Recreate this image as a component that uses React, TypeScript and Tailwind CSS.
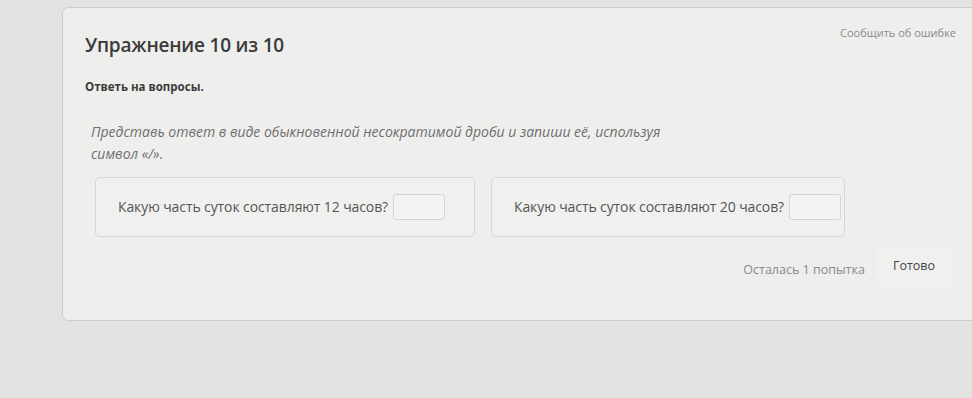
import React from "react";

const questions = [
  { id: 1, text: "Какую часть суток составляют 12 часов?", width: "w-[380px]" },
  { id: 2, text: "Какую часть суток составляют 20 часов?", width: "w-[354px]" },
];

const App: React.FC = () => {
  return (
    <div className="w-[972px] h-[398px] overflow-hidden bg-[#e3e3e2] pt-[7px] pl-[62px] font-['Open_Sans',sans-serif]">
      <div className="w-[940px] h-[314px] bg-[#eeeeed] border border-[#cdcdcc] rounded-[6px] pl-[22px] pr-[14px] pt-[14px] flex flex-col">
        <div className="flex justify-between items-start">
          <h1 className="mt-[14px] text-[19px] font-semibold text-[#3a3a3a] leading-none tracking-[-0.2px]">
            Упражнение 10 из 10
          </h1>
          <a className="text-[11px] text-[#8a8a8a] mt-[3px] mr-[31px]">Сообщить об ошибке</a>
        </div>

        <p className="mt-[26px] text-[11.5px] font-bold text-[#3a3a3a] leading-none">Ответь на вопросы.</p>

        <p className="mt-[28px] ml-[6px] w-[600px] text-[14px] italic text-[#6e6e6e] leading-[22px]">
          Представь ответ в виде обыкновенной несократимой дроби и запиши её, используя символ «/».
        </p>

        <div className="mt-[12px] ml-[10px] flex gap-[16px]">
          {questions.map((q) => (
            <div
              key={q.id}
              className={`${q.width} h-[60px] border border-[#d6d6d5] rounded-[5px] bg-[#f0f0ef] flex items-center pl-[22px]`}
            >
              <span className="text-[14px] tracking-[-0.1px] text-[#555555]">{q.text}</span>
              <input
                type="text"
                className="ml-[5px] w-[52px] h-[26px] border border-[#d4d4d3] rounded-[3px] bg-[#f3f3f2] outline-none"
              />
            </div>
          ))}
        </div>

        <div className="mt-[8px] flex justify-end items-center mr-[36px]">
          <span className="mt-[8px] text-[12.5px] text-[#8a8a8a]">Осталась 1 попытка</span>
          <button className="ml-[12px] px-[16px] py-[12px] rounded-[4px] bg-[#f0f0ef] text-[12.5px] text-[#444444]">
            Готово
          </button>
        </div>
      </div>
    </div>
  );
};

export default App;
